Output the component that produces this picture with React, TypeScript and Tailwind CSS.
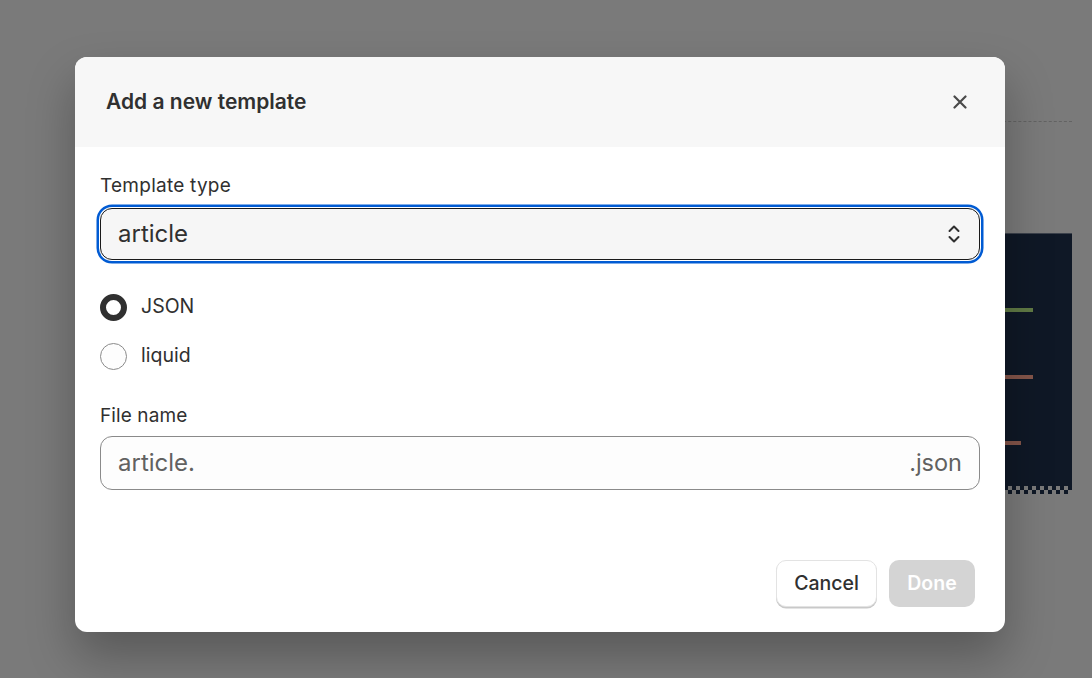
import React from "react";

function Checker() {
  return (
    <svg width="100%" height="8" className="block">
      <defs>
        <pattern id="chk" width="8" height="8" patternUnits="userSpaceOnUse">
          <rect width="8" height="8" fill="#0f1826" />
          <rect x="0" y="0" width="4" height="4" fill="#7a7a7a" />
          <rect x="4" y="4" width="4" height="4" fill="#7a7a7a" />
        </pattern>
      </defs>
      <rect width="100%" height="8" fill="url(#chk)" />
    </svg>
  );
}

export default function App() {
  return (
    <div
      className="relative w-[1092px] h-[678px] overflow-hidden bg-[#7a7a7a]"
      style={{ fontFamily: "Inter, 'Noto Sans', 'Liberation Sans', sans-serif" }}
    >
      {/* background page */}
      <div className="flex h-full">
        <div className="flex-1" />
        <div className="w-[160px] mr-[20px] flex flex-col">
          <div className="mt-[121px] border-t border-dashed border-[#636363]" />
          <div className="mt-[111px] h-[261px] bg-[#0f1826] border-t border-[#3b414b] flex flex-col items-end">
            <div className="mt-[74px] mr-[39px] w-[60px] h-[4px] bg-[#607a45]" />
            <div className="mt-[63px] mr-[39px] w-[60px] h-[4px] bg-[#84554a]" />
            <div className="mt-[62px] mr-[51px] w-[60px] h-[4px] bg-[#84554a]" />
            <div className="mt-auto w-full">
              <Checker />
            </div>
          </div>
        </div>
      </div>

      {/* modal overlay */}
      <div className="absolute inset-0 pl-[75px] pt-[57px]">
        <div className="w-[930px] h-[575px] bg-white rounded-[12px] overflow-hidden shadow-[0_24px_48px_rgba(0,0,0,0.28)] flex flex-col text-[#303030]">
          {/* header */}
          <div className="h-[90px] shrink-0 bg-[#f7f7f7] flex items-center justify-between pl-[31px] pr-[31px]">
            <h2 className="text-[21px] font-semibold text-[#303030]">Add a new template</h2>
            <button className="w-[28px] h-[28px] flex items-center justify-center text-[#4a4a4a]">
              <svg width="14" height="14" viewBox="0 0 14 14" fill="none">
                <path d="M1.5 1.5 L12.5 12.5 M12.5 1.5 L1.5 12.5" stroke="currentColor" strokeWidth="2.2" strokeLinecap="round" />
              </svg>
            </button>
          </div>

          {/* body */}
          <div className="flex-1 flex flex-col px-[25px] pt-[27px]">
            <label className="text-[19px] leading-[24px] tracking-[0.25px] text-[#303030]">Template type</label>
            <div className="mt-[10px] h-[52px] rounded-[12px] border border-[#1a1a1a] bg-[#f6f6f6] shadow-[0_0_0_1px_#ffffff,0_0_0_3.5px_#005bd3] flex items-center justify-between pl-[17px] pr-[18px]">
              <span className="text-[24px] text-[#303030]">article</span>
              <svg width="14" height="22" viewBox="0 0 14 22" fill="none" className="text-[#303030]">
                <path d="M2.5 8 L7 3.5 L11.5 8" stroke="currentColor" strokeWidth="2" strokeLinecap="round" strokeLinejoin="round" />
                <path d="M2.5 14 L7 18.5 L11.5 14" stroke="currentColor" strokeWidth="2" strokeLinecap="round" strokeLinejoin="round" />
              </svg>
            </div>

            <div className="mt-[34px] flex flex-col gap-[23px]">
              <div className="flex items-center gap-[14px] h-[26px]">
                <span className="w-[27px] h-[27px] rounded-full border-[6.5px] border-[#303030] bg-white" />
                <span className="text-[19.5px] text-[#303030]">JSON</span>
              </div>
              <div className="flex items-center gap-[14px] h-[26px]">
                <span className="w-[27px] h-[27px] rounded-full border border-[#8a8a8a] bg-[#fdfdfd]" />
                <span className="text-[19.5px] text-[#303030]">liquid</span>
              </div>
            </div>

            <label className="mt-[35px] text-[19px] leading-[24px] tracking-[0.1px] text-[#303030]">File name</label>
            <div className="mt-[8px] h-[54px] rounded-[12px] border border-[#8a8a8a] bg-[#fdfdfd] flex items-center justify-between pl-[17px] pr-[17px]">
              <span className="text-[24px] text-[#616161]">article.</span>
              <span className="text-[23.5px] text-[#616161]">.json</span>
            </div>
          </div>

          {/* footer */}
          <div className="flex justify-end gap-[12px] pr-[30px] pb-[25px]">
            <button className="h-[47px] w-[101px] rounded-[10px] bg-white border border-[#e3e3e3] shadow-[0_1.5px_0_#c9c9c9] text-[19.5px] font-medium text-[#303030]">
              Cancel
            </button>
            <button className="h-[47px] w-[86px] rounded-[10px] bg-[#d4d4d4] text-[19.5px] font-semibold text-white">
              Done
            </button>
          </div>
        </div>
      </div>
    </div>
  );
}
